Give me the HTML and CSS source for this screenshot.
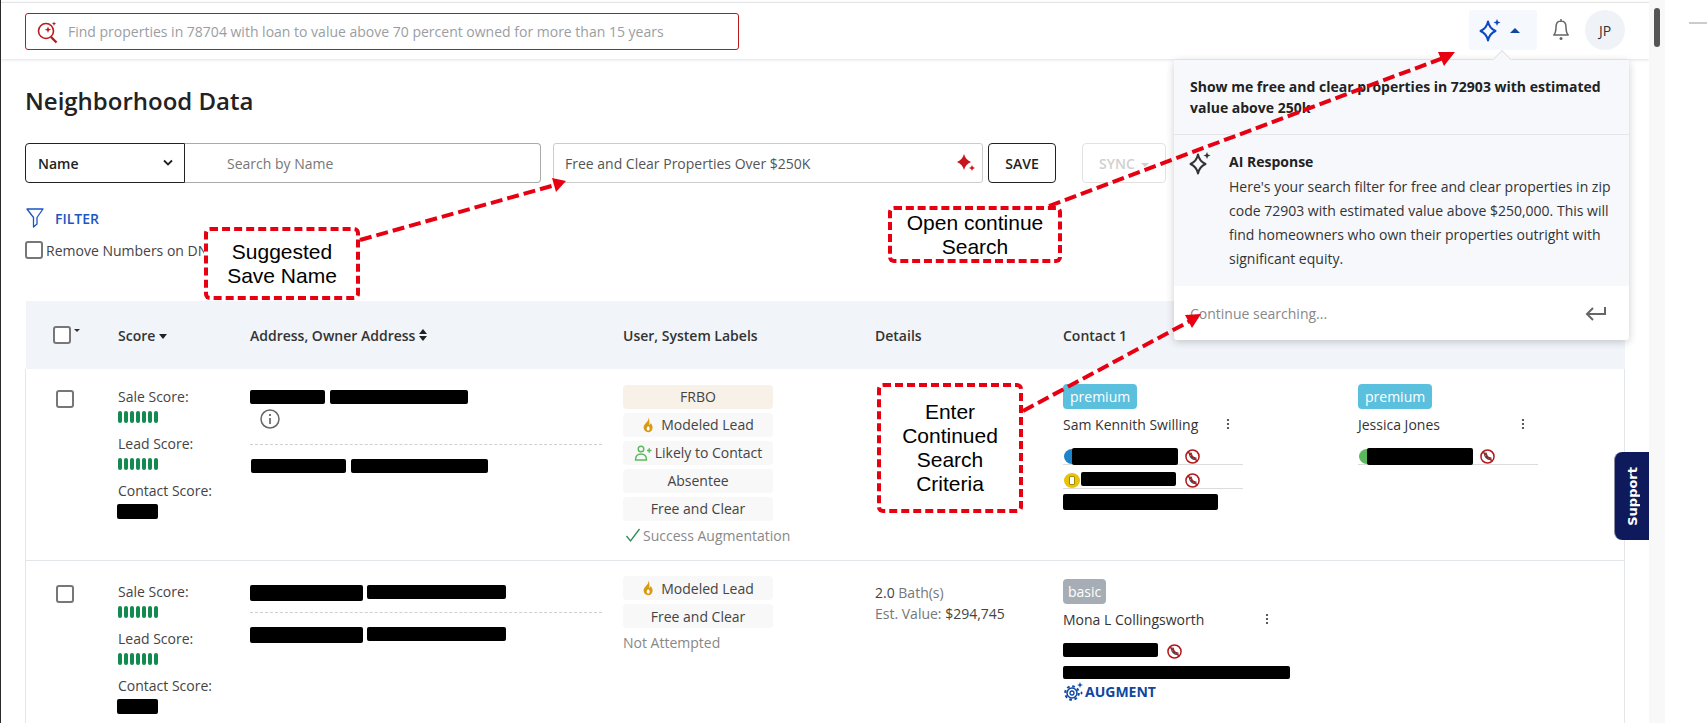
FILE: index.html
```html
<!DOCTYPE html>
<html lang="en">
<head>
<meta charset="utf-8">
<title>Neighborhood Data</title>
<link rel="stylesheet" href="styles.css">
</head>
<body>
<svg class="defs" width="0" height="0" aria-hidden="true">
  <defs>
    <symbol id="block" viewBox="0 0 16 16">
      <circle cx="8" cy="8" r="7" fill="#fff" stroke="#b3191c" stroke-width="1.600"/>
      <path d="M4.600 4.600c0 3.800 3 6.800 6.800 6.800l.4-1.800-2.200-.8-.9.9c-.9-.4-1.800-1.300-2.200-2.200l.9-.9-.8-2.200z" fill="none" stroke="#444" stroke-width="1.100"/>
      <path d="M3.400 3.400l9.200 9.200" stroke="#b3191c" stroke-width="1.500"/>
    </symbol>
    <symbol id="flame" viewBox="0 0 12 16">
      <path d="M6.400 .6c.5 2.500-1 3.800-2.400 5.400C2.800 7.400 1.600 8.700 1.600 10.600c0 2.700 2 4.600 4.500 4.600s4.500-1.900 4.500-4.500c0-2.100-1-3.600-2-4.800-.2 1.100-.6 1.700-1.300 2.100C7.500 5.400 7.700 2.800 6.400.6z" fill="#d89a12"/>
      <path d="M6.200 9c-.9 1-1.500 1.700-1.500 2.800 0 1 .6 1.800 1.500 1.800s1.500-.8 1.500-1.800c0-1.100-.7-1.900-1.500-2.800z" fill="#fff"/>
    </symbol>
    <symbol id="bars" viewBox="0 0 40 12">
      <rect x="0" width="4" height="12" rx="2"/><rect x="6" width="4" height="12" rx="2"/><rect x="12" width="4" height="12" rx="2"/><rect x="18" width="4" height="12" rx="2"/><rect x="24" width="4" height="12" rx="2"/><rect x="30" width="4" height="12" rx="2"/><rect x="36" width="4" height="12" rx="2"/>
    </symbol>
    <symbol id="dots" viewBox="0 0 4 12">
      <circle cx="2" cy="2" r="1.100"/><circle cx="2" cy="6" r="1.100"/><circle cx="2" cy="10" r="1.100"/>
    </symbol>
    <symbol id="spark" viewBox="0 0 24 24">
      <path d="M9 3.500c.9 4.500 2.800 7.400 7.500 9.500-4.700 2.100-6.600 5-7.500 9.500-.9-4.500-2.800-7.400-7.500-9.500 4.700-2.100 6.600-5 7.500-9.500z" fill="none" stroke="currentColor" stroke-width="2" stroke-linejoin="round"/>
      <path d="M18 1l1 2.500 2.500 1-2.500 1-1 2.500-1-2.500-2.500-1 2.500-1z" fill="currentColor"/>
    </symbol>
  </defs>
</svg>

<div class="app">
  <main class="main">
    <header class="topbar">
      <div class="ai-search">
        <svg class="ai-search-icon" viewBox="0 0 24 24" width="24" height="24">
          <circle cx="10" cy="11" r="7.500" fill="none" stroke="#b71c1c" stroke-width="1.600"/>
          <path d="M15 17l5.500 5.500" stroke="#b71c1c" stroke-width="2.400"/>
          <path d="M12 6.500l.9 2.300 2.300.9-2.300.9-.9 2.300-.9-2.300-2.300-.9 2.300-.9z" fill="#b71c1c"/>
          <path d="M18 1.500l.6 1.600 1.600.6-1.600.6-.6 1.600-.6-1.600-1.600-.6 1.600-.6z" fill="#b71c1c"/>
        </svg>
        <span>Find properties in 78704 with loan to value above 70 percent owned for more than 15 years</span>
      </div>
      <div class="top-actions">
        <div class="ai-toggle">
          <svg class="ai-spark" width="24" height="24"><use href="#spark"/></svg>
          <span class="caret-up"></span>
        </div>
        <svg class="bell" viewBox="0 0 20 24" width="20" height="24">
          <path d="M10 3c-3.500 0-5 2.800-5 6 0 4-.8 6.500-2.200 8h14.400c-1.400-1.500-2.200-4-2.200-8 0-3.200-1.500-6-5-6z" fill="none" stroke="#666" stroke-width="1.500" stroke-linejoin="round"/>
          <path d="M10 1v2" stroke="#666" stroke-width="1.500"/>
          <circle cx="10" cy="20.500" r="1.500" fill="#666"/>
        </svg>
        <div class="avatar">JP</div>
      </div>
    </header>

    <section class="content">
      <h1 class="title">Neighborhood Data</h1>

      <div class="controls">
        <div class="field-select">
          <span>Name</span>
          <svg viewBox="0 0 10 8" width="10" height="8"><path d="M1 1.500l4 4 4-4" fill="none" stroke="#222" stroke-width="1.800"/></svg>
        </div>
        <div class="field-search">Search by Name</div>
        <div class="field-save">
          <span>Free and Clear Properties Over $250K</span>
          <svg class="save-spark" viewBox="0 0 20 20" width="20" height="20">
            <path d="M8 1c1 3.800 3 6 7 8-4 2-6 4.200-7 8-1-3.800-3-6-7-8 4-2 6-4.200 7-8z" fill="#c8171c"/>
            <path d="M16 12l.9 2.100 2.100.9-2.100.9-.9 2.100-.9-2.100-2.100-.9 2.100-.9z" fill="#c8171c"/>
          </svg>
        </div>
        <button class="btn-save" type="button">SAVE</button>
        <button class="btn-sync" type="button">SYNC<span class="caret-down"></span></button>
      </div>

      <div class="filter">
        <svg viewBox="0 0 18 20" width="18" height="20"><path d="M1 1h16l-6 8.500V16l-3.500 3V9.500z" fill="none" stroke="#1a56c4" stroke-width="1.300" stroke-linejoin="round"/></svg>
        <span>FILTER</span>
      </div>

      <label class="remove-dnc"><span class="check"></span><span>Remove Numbers on DNC</span></label>

      <div class="table">
        <div class="thead grid">
          <div class="th-check"><span class="check"></span><span class="mini-caret"></span></div>
          <div class="th">Score <span class="caret-sort"></span></div>
          <div class="th">Address, Owner Address <span class="sort-both"><i></i><i></i></span></div>
          <div class="th">User, System Labels</div>
          <div class="th">Details</div>
          <div class="th">Contact 1</div>
          <div></div>
        </div>

        <div class="row grid row-one">
          <div class="cell-check"><span class="check"></span></div>
          <div class="score">
            <div class="score-label">Sale Score:</div>
            <svg class="bars" width="40" height="12"><use href="#bars"/></svg>
            <div class="score-label gap">Lead Score:</div>
            <svg class="bars" width="40" height="12"><use href="#bars"/></svg>
            <div class="score-label gap">Contact Score:</div>
            <span class="redact score-hidden"></span>
          </div>
          <div class="address">
            <div class="redact-line"><span class="redact a75"></span><span class="redact a138"></span></div>
            <svg class="info" viewBox="0 0 20 20" width="20" height="20"><circle cx="10" cy="10" r="9" fill="none" stroke="#666" stroke-width="1.500"/><circle cx="10" cy="6" r="1.100" fill="#555"/><path d="M10 9v6" stroke="#555" stroke-width="1.500"/></svg>
            <div class="dash"></div>
            <div class="redact-line owner"><span class="redact a95"></span><span class="redact a137"></span></div>
          </div>
          <div class="labels">
            <div class="tag tag-frbo">FRBO</div>
            <div class="tag"><svg width="12" height="16"><use href="#flame"/></svg>Modeled Lead</div>
            <div class="tag tag-tight">
              <svg viewBox="0 0 18 18" width="18" height="18"><circle cx="7" cy="5" r="2.800" fill="none" stroke="#5cb85c" stroke-width="1.400"/><path d="M1.500 16c0-4 2.300-6 5.500-6s5.500 2 5.500 6z" fill="none" stroke="#5cb85c" stroke-width="1.400"/><path d="M13 6.500h4.500M15.200 4.200v4.600" stroke="#5cb85c" stroke-width="1.400"/></svg>Likely to Contact
            </div>
            <div class="tag">Absentee</div>
            <div class="tag">Free and Clear</div>
            <div class="status"><svg viewBox="0 0 16 16" width="16" height="16"><path d="M1.500 9l4 5L14.500 2" fill="none" stroke="#2e8b57" stroke-width="1.300"/></svg>Success Augmentation</div>
          </div>
          <div class="details"></div>
          <div class="contact">
            <span class="badge">premium</span>
            <div class="name"><span>Sam Kennith Swilling</span><svg width="4" height="12"><use href="#dots"/></svg></div>
            <div class="phone">
              <span class="dot dot-blue"></span><span class="redact p106 over"></span>
              <svg class="no-call" width="15" height="15"><use href="#block"/></svg>
            </div>
            <div class="phone">
              <span class="dot dot-yellow"><i></i></span><span class="redact p95"></span>
              <svg class="no-call wide" width="15" height="15"><use href="#block"/></svg>
            </div>
            <span class="redact email"></span>
          </div>
          <div class="contact">
            <span class="badge">premium</span>
            <div class="name"><span>Jessica Jones</span><svg width="4" height="12"><use href="#dots"/></svg></div>
            <div class="phone">
              <span class="dot dot-green"></span><span class="redact p106 over"></span>
              <svg class="no-call" width="15" height="15"><use href="#block"/></svg>
            </div>
          </div>
        </div>

        <div class="row grid row-two">
          <div class="cell-check"><span class="check"></span></div>
          <div class="score">
            <div class="score-label">Sale Score:</div>
            <svg class="bars" width="40" height="12"><use href="#bars"/></svg>
            <div class="score-label gap">Lead Score:</div>
            <svg class="bars" width="40" height="12"><use href="#bars"/></svg>
            <div class="score-label gap">Contact Score:</div>
            <span class="redact score-hidden"></span>
          </div>
          <div class="address">
            <div class="redact-line"><span class="redact a113 tall"></span><span class="redact a139"></span></div>
            <div class="dash tight"></div>
            <div class="redact-line owner"><span class="redact a113 tall"></span><span class="redact a139"></span></div>
          </div>
          <div class="labels">
            <div class="tag"><svg width="12" height="16"><use href="#flame"/></svg>Modeled Lead</div>
            <div class="tag">Free and Clear</div>
            <div class="status muted">Not Attempted</div>
          </div>
          <div class="details">
            <div><b>2.0</b> Bath(s)</div>
            <div>Est. Value: <b>$294,745</b></div>
          </div>
          <div class="contact">
            <span class="badge badge-basic">basic</span>
            <div class="name name-wide"><span>Mona L Collingsworth</span><svg width="4" height="12"><use href="#dots"/></svg></div>
            <div class="phone-plain"><span class="redact p95"></span><svg class="no-call wide" width="15" height="15"><use href="#block"/></svg></div>
            <span class="redact email-long"></span>
            <div class="augment">
              <svg viewBox="0 0 20 20" width="20" height="20">
                <circle cx="9" cy="12" r="6.800" fill="none" stroke="#0d47a1" stroke-width="2" stroke-dasharray="2.700 2.640"/>
                <circle cx="9" cy="12" r="5" fill="none" stroke="#0d47a1" stroke-width="1.500"/>
                <circle cx="9" cy="12" r="2" fill="none" stroke="#0d47a1" stroke-width="1.300"/>
                <path d="M17 1l.8 2.200 2.200.8-2.200.8-.8 2.200-.8-2.200-2.200-.8 2.200-.8z" fill="#0d47a1"/>
                <path d="M18.500 10l.5 1.300 1 .7-1 .7-.5 1.300-.5-1.300-1-.7 1-.7z" fill="#0d47a1"/>
              </svg>
              <span>AUGMENT</span>
            </div>
          </div>
          <div></div>
        </div>
      </div>
    </section>
  </main>

  <div class="scroll-strip"><span class="thumb"></span></div>
  <div class="outside"><span class="outside-dash"></span></div>

  <aside class="popover">
    <span class="notch"></span>
    <div class="pop-query">Show me free and clear properties in 72903 with estimated value above 250k</div>
    <div class="pop-response">
      <svg class="pop-spark" width="24" height="24"><use href="#spark"/></svg>
      <div>
        <div class="pop-head">AI Response</div>
        <p class="pop-text">Here's your search filter for free and clear properties in zip code 72903 with estimated value above $250,000. This will find homeowners who own their properties outright with significant equity.</p>
      </div>
    </div>
    <div class="pop-input">
      <span>Continue searching...</span>
      <svg viewBox="0 0 22 16" width="22" height="16"><path d="M20 2v7H3M8 3L2 9l6 6" fill="none" stroke="#666" stroke-width="2"/></svg>
    </div>
  </aside>

  <button class="support" type="button"><span>Support</span></button>

  <div class="callout callout-name">Suggested<br>Save Name</div>
  <div class="callout callout-open">Open continue<br>Search</div>
  <div class="callout callout-enter">Enter<br>Continued<br>Search<br>Criteria</div>

  <svg class="arrows" viewBox="0 0 1707 723" width="1707" height="723" aria-hidden="true">
    <path class="arrow" d="M360 240L555 185"/>
    <path class="head" d="M566 181L552 178L556 192z"/>
    <path class="arrow" d="M1049 206L1443 58"/>
    <path class="head" d="M1455 52L1438 52L1444 66z"/>
    <path class="arrow" d="M1023 411L1190 321"/>
    <path class="head" d="M1201 314L1185 315L1192 328z"/>
  </svg>
</div>
</body>
</html>
```

FILE: styles.css
```css
* { box-sizing: border-box; }
html, body { margin: 0; padding: 0; height: 723px; overflow: hidden; background: #fff; }
body { font-family: "Open Sans", "Liberation Sans", sans-serif; font-size: 14px; color: #333; }
.defs { position: absolute; }

.app { position: relative; display: flex; width: 1707px; height: 723px; overflow: hidden; }
.main { width: 1649px; height: 723px; border-left: 1px solid #2a2a2a; overflow: hidden; flex: none; }
.scroll-strip { width: 16px; height: 723px; background: #f8f8f8; flex: none; padding: 8px 0 0 5px; }
.thumb { display: block; width: 6px; height: 39px; border-radius: 3px; background: #555; }
.outside { flex: 1; padding: 22px 0 0 24px; }
.outside-dash { display: block; height: 2px; background: #ccc; }

.topbar {
  display: flex; justify-content: space-between; align-items: flex-start;
  height: 57px; margin: 2px 0 0; border-top: 1px solid #e4e4e4;
  box-shadow: 0 1px 3px rgba(0,0,0,.12); padding: 7px 24px 0 24px;
}
.ai-search {
  display: flex; align-items: center; width: 714px; height: 37px; margin-top: 3px;
  border: 1px solid #b71c1c; border-radius: 3px; padding-left: 10px; color: #9a9ea3;
}
.ai-search-icon { margin-right: 8px; flex: none; }
.top-actions { display: flex; align-items: center; gap: 0; }
.ai-toggle {
  display: flex; align-items: center; width: 68px; height: 40px; background: #f5f8fd;
  border-radius: 3px; padding-left: 10px; color: #0d47c1;
}
.caret-up { width: 0; height: 0; margin-left: 7px; border: 5px solid transparent; border-top: 0; border-bottom: 5px solid #0d47a1; }
.bell { margin: 0 14px 0 14px; }
.avatar {
  width: 40px; height: 40px; border-radius: 50%; background: #eff3f8;
  display: flex; align-items: center; justify-content: center; font-size: 14px; color: #333;
}

.content { padding: 0 0 0 24px; }
.title { margin: 27px 0 0; font-size: 24px; line-height: 30px; font-weight: 600; color: #222; }

.controls { display: flex; height: 40px; margin-top: 27px; }
.field-select {
  display: flex; justify-content: space-between; align-items: center; width: 160px;
  border: 1px solid #222; border-radius: 4px 0 0 4px; padding: 0 11px 0 12px; font-weight: 600; color: #222;
}
.field-search {
  display: flex; align-items: center; width: 356px; border: 1px solid #aaa; border-left: 0;
  border-radius: 0 4px 4px 0; padding-left: 42px; color: #777;
}
.field-save {
  display: flex; justify-content: space-between; align-items: center; width: 430px; margin-left: 12px;
  border: 1px solid #ccc; border-radius: 3px; padding: 0 6px 0 11px; color: #555;
}
.save-spark { flex: none; }
.btn-save, .btn-sync { font-family: inherit; font-size: 14px; font-weight: 600; border-radius: 4px; background: #fff; padding: 0; }
.btn-save { width: 68px; margin-left: 5px; border: 1px solid #222; color: #222; }
.btn-sync { width: 84px; margin-left: 26px; border: 1px solid #e2e2e2; color: #d0d0d0; }
.caret-down { display: inline-block; margin-left: 6px; border: 4px solid transparent; border-bottom: 0; border-top: 4px solid #d0d0d0; vertical-align: middle; }

.filter { display: flex; align-items: center; height: 20px; margin: 25px 0 0 1px; gap: 11px; color: #1a56c4; font-weight: 600; }
.check { display: inline-block; width: 18px; height: 18px; border: 2px solid #777; border-radius: 3px; background: #fff; flex: none; }
.remove-dnc { display: flex; align-items: center; gap: 3px; height: 18px; margin-top: 13px; color: #444; white-space: nowrap; }

.table { margin-top: 42px; width: 1600px; }
.grid { display: grid; grid-template-columns: 92px 132px 373px 252px 188px 295px 1fr; }
.thead { height: 68px; margin-left: 1px; background: #f1f5fa; align-items: center; color: #333; font-weight: 600; }
.th { display: flex; align-items: center; gap: 4px; white-space: nowrap; }
.th-check { display: flex; align-items: center; padding-left: 27px; }
.mini-caret { align-self: flex-start; margin: 3px 0 0 3px; border: 3px solid transparent; border-bottom: 0; border-top: 3px solid #333; }
.caret-sort { display: block; border: 4px solid transparent; border-bottom: 0; border-top: 5px solid #222; margin-top: 3px; }
.sort-both { display: flex; flex-direction: column; gap: 2px; }
.sort-both i { display: block; width: 0; height: 0; border: 4px solid transparent; border-top: 0; border-bottom: 5px solid #222; }
.sort-both i + i { border-bottom: 0; border-top: 5px solid #222; }

.row { border-left: 1px solid #e4e7ea; border-right: 1px solid #e4e7ea; border-bottom: 1px solid #e4e7ea; align-items: start; }
.row-one { height: 192px; padding-top: 15px; }
.row-two { height: 200px; padding-top: 18px; }
.cell-check { padding: 6px 0 0 30px; }
.cell-check .check { display: block; }
.score { padding-top: 3px; color: #444; }
.score-label { line-height: 20px; height: 20px; white-space: nowrap; }
.score-label.gap { margin-top: 11px; }
.bars { display: block; margin-top: 4px; fill: #138a4f; }
.redact { display: block; background: #000; border-radius: 2px; height: 14px; flex: none; }
.score-hidden { width: 41px; height: 15px; margin-top: 3px; margin-left: -1px; }

.address { padding-top: 6px; }
.redact-line { display: flex; gap: 5px; align-items: flex-start; }
.row-two .redact-line { gap: 4px; }
.a75 { width: 75px; } .a138 { width: 138px; } .a95 { width: 95px; margin-left: 1px; } .a137 { width: 137px; }
.a113 { width: 113px; } .a139 { width: 139px; } .tall { height: 16px; }
.info { display: block; margin: 5px 0 0 10px; }
.dash { width: 352px; border-top: 1px dashed #d0d0d0; margin-top: 15px; }
.dash.tight { margin-top: 11px; }
.owner { margin-top: 14px; }

.labels { display: flex; flex-direction: column; gap: 4px; width: 150px; }
.row-one .labels { margin-top: 1px; }
.row-two .labels { margin-top: -3px; }
.tag {
  display: flex; align-items: center; justify-content: center; gap: 7px; height: 24px;
  background: #f8f8f8; border-radius: 4px; color: #444;
}
.row-one .tag { padding-bottom: 1px; }
.tag-tight { gap: 3px; }
.tag-frbo { background: #f8f1e7; }
.status { display: flex; align-items: center; gap: 2px; height: 20px; color: #888; white-space: nowrap; padding-left: 2px; }
.status svg { flex: none; }
.status.muted { padding-left: 0; }

.details { color: #777; line-height: 21px; padding-top: 3px; }
.details b { font-weight: 400; color: #444; }

.contact { color: #333; }
.badge { display: inline-block; height: 25px; line-height: 25px; padding: 0 7px; border-radius: 4px; background: #5bc0de; color: #fff; font-size: 14px; }
.badge-basic { background: #a7adb5; padding: 0 5px; }
.name { display: flex; justify-content: space-between; align-items: center; width: 167px; height: 20px; margin-top: 5px; white-space: nowrap; fill: #333; }
.name-wide { width: 206px; }
.phone { display: flex; align-items: flex-start; width: 180px; height: 24px; padding-top: 7px; border-bottom: 1px solid #dcdcdc; }
.name + .phone { margin-top: 7px; }
.p106 { width: 106px; height: 17px; }
.p95 { width: 95px; }
.over { margin-left: -8px; position: relative; }
.no-call { margin: 1px 0 0 7px; flex: none; }
.no-call.wide { margin-left: 9px; }
.dot { position: relative; display: block; width: 16px; height: 15px; border-radius: 50%; margin: 1px 0 0 1px; flex: none; }
.dot-blue { background: #1e84c9; }
.dot-green { background: #5cb85c; }
.dot-yellow { background: #e8c30b; margin: 1px 1px 0 1px; display: flex; align-items: center; justify-content: center; }
.dot-yellow i { display: block; width: 6px; height: 9px; background: #fff; border: 1px solid #a88a00; border-radius: 1px; }
.email { width: 155px; height: 16px; margin-top: 5px; }
.phone-plain { display: flex; margin-top: 14px; }
.email-long { width: 227px; height: 13px; margin-top: 7px; }
.augment { display: flex; align-items: center; gap: 2px; margin-top: 2px; height: 20px; color: #0d47a1; font-weight: 700; white-space: nowrap; }

.popover {
  position: absolute; left: 1174px; top: 60px; width: 455px; height: 280px; display: flex; flex-direction: column;
  background: #fff; border-radius: 3px; box-shadow: 0 2px 8px rgba(0,0,0,.2);
}
.notch {
  position: absolute; top: -7px; left: 321px; width: 14px; height: 14px; background: #f6f8fc;
  border-left: 1px solid #e4e4e4; border-top: 1px solid #e4e4e4; transform: rotate(45deg);
}
.pop-query { position: relative; height: 75px; padding: 16px 16px 0; background: #f6f8fc; border-bottom: 1px solid #e4e6ea; font-weight: 700; line-height: 21px; color: #222; }
.pop-response { display: flex; height: 151px; padding: 15px 16px 0; background: #f6f8fc; }
.pop-spark { flex: none; margin: 1px 16px 0 -1px; color: #333; }
.pop-head { font-weight: 700; line-height: 24px; color: #222; }
.pop-text { margin: 1px 0 0; line-height: 24px; color: #333; }
.pop-input { display: flex; justify-content: space-between; align-items: center; flex: 1; padding: 0 22px 0 16px; color: #888; }

.support {
  position: absolute; left: 1614px; top: 452px; width: 35px; height: 88px; padding: 0;
  background: #0f1a5c; border: 0; border-left: 1px solid #8a8fa8; border-radius: 8px 0 0 8px; color: #fff;
  display: flex; align-items: center; justify-content: center;
}
.support span { writing-mode: vertical-rl; transform: rotate(180deg); font: 700 13px "DejaVu Sans", sans-serif; }

.callout {
  position: absolute; display: flex; align-items: center; justify-content: center; text-align: center;
  background: #fff; border: 4px dashed #e60012; border-radius: 6px;
  font-family: "Liberation Sans", Arial, sans-serif; font-size: 21px; line-height: 24px; color: #000;
}
.callout-name { left: 204px; top: 227px; width: 156px; height: 73px; }
.callout-open { left: 888px; top: 206px; width: 174px; height: 57px; }
.callout-enter { left: 877px; top: 383px; width: 146px; height: 130px; }

.arrows { position: absolute; left: 0; top: 0; pointer-events: none; }
.arrow { fill: none; stroke: #e60012; stroke-width: 4; stroke-dasharray: 12 5; }
.head { fill: #e60012; }
```
